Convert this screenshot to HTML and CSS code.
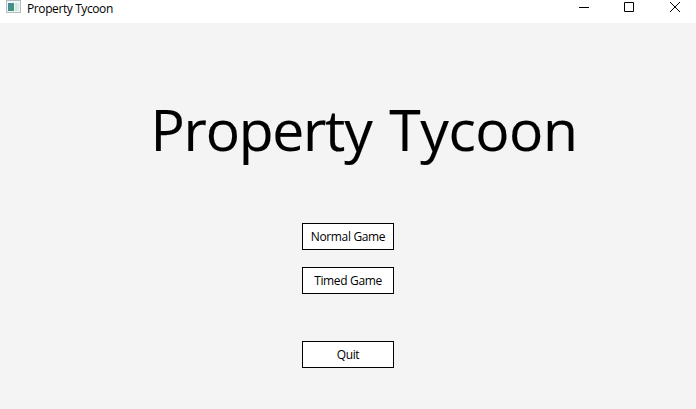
FILE: index.html
```html
<!DOCTYPE html>
<html lang="en">
<head>
<meta charset="utf-8">
<title>Property Tycoon</title>
<link rel="stylesheet" href="styles.css">
</head>
<body>
<header class="titlebar">
  <svg class="app-icon" width="16" height="14" viewBox="0 0 16 14">
    <defs><linearGradient id="pane" x2="1" y2="1"><stop stop-color="#4b83a5"/><stop offset="1" stop-color="#35a06c"/></linearGradient></defs>
    <path fill="#b4babf" d="M0 0h15v13H0z"/>
    <path fill="#f1f5f6" d="M1 1h13v11H1z"/>
    <path fill="url(#pane)" d="M2 3h6v8H2z"/>
    <path fill="#cfe5e4" d="M9 3h2v8H9z"/>
    <path fill="#e2e9ed" d="M11 3h2v8h-2z"/>
  </svg>
  <span class="caption">Property Tycoon</span>
  <svg class="controls" width="136" height="23" viewBox="0 0 136 23" fill="none" stroke="#000"><path d="M19 7.5h10M64.5 2.5h9v9h-9z"/><path d="M110 2l10 10M120 2l-10 10"/></svg>
</header>
<main class="menu">
  <h1><span class="first">Property</span> Tycoon</h1>
  <button>Normal Game</button>
  <button>Timed Game</button>
  <button class="quit">Quit</button>
</main>
</body>
</html>
```
FILE: styles.css
```css
* { box-sizing: border-box; }
body { margin: 0; width: 696px; height: 409px; overflow: hidden; background: #f4f4f4; color: #000; font-family: "Open Sans", "Noto Sans", sans-serif; }
.titlebar { height: 23px; background: #fff; display: flex; }
.app-icon { margin-left: 6px; }
.caption { margin-left: 5px; font-size: 12px; line-height: 17px; letter-spacing: -0.4px; white-space: nowrap; }
.controls { margin-left: auto; }
.menu { display: flex; flex-direction: column; align-items: center; }
h1 { margin: 66px 0 54px 32px; height: 80px; font-size: 57px; line-height: 80px; font-weight: 400; letter-spacing: -0.45px; word-spacing: 3.5px; white-space: nowrap; -webkit-text-stroke: 0.15px #000; }
.first { letter-spacing: -1.25px; }
button { width: 92px; height: 27px; margin: 0 0 17px; padding: 0; border: 1px solid #000; background: #fff; color: #000; font-family: inherit; font-size: 12px; letter-spacing: -0.35px; }
.quit { margin-top: 30px; }
```
